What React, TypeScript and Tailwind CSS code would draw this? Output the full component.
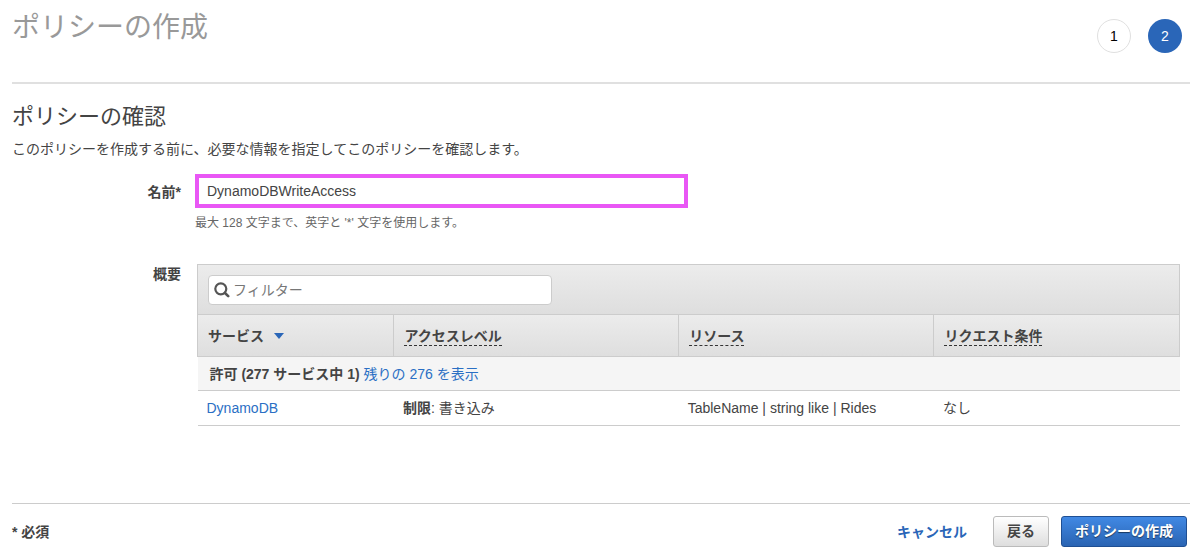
import { useState } from "react";

type PolicyRow = {
  service: string;
  level: string;
  access: string;
  resource: string;
  condition: string;
};

const rows: PolicyRow[] = [
  {
    service: "DynamoDB",
    level: "制限",
    access: "書き込み",
    resource: "TableName | string like | Rides",
    condition: "なし",
  },
];

const hintedHeaders = ["アクセスレベル", "リソース", "リクエスト条件"];

function StepBadge({ step, active }: { step: number; active?: boolean }) {
  return (
    <li
      aria-current={active ? "step" : undefined}
      className={`flex h-[34px] w-[34px] items-center justify-center rounded-full text-sm ${
        active ? "bg-[#2a66b8] text-white" : "border border-[#e0e0e0] text-black"
      }`}
    >
      {step}
    </li>
  );
}

function SearchIcon() {
  return (
    <svg viewBox="0 0 16 16" className="h-4 w-4 shrink-0" fill="none" stroke="#555" aria-hidden="true">
      <circle cx="6.8" cy="6.8" r="5.5" strokeWidth="2.2" />
      <path d="M11 11 14.2 14.2" strokeWidth="2.6" strokeLinecap="round" />
    </svg>
  );
}

export default function App() {
  const [name, setName] = useState("DynamoDBWriteAccess");
  const [filter, setFilter] = useState("");

  const visible = rows.filter((row) => row.service.toLowerCase().includes(filter.toLowerCase()));

  return (
    <main className="bg-white pr-[10px] pl-3 font-['Liberation_Sans','Noto_Sans_CJK_JP',sans-serif] text-sm leading-5 text-[#444]">
      <header className="flex h-[84px] items-start justify-between border-b-2 border-[#e0e0e0] pr-2">
        <h1 className="pt-2 text-[28px] leading-10 text-[#999]">ポリシーの作成</h1>
        <ol className="flex gap-[17px] pt-[19px]">
          <StepBadge step={1} />
          <StepBadge step={2} active />
        </ol>
      </header>

      <section className="pt-[17px]">
        <h2 className="text-[22px] leading-8">ポリシーの確認</h2>
        <p className="mt-[6px]">このポリシーを作成する前に、必要な情報を指定してこのポリシーを確認します。</p>

        <div className="mt-[15px] flex gap-[14px]">
          <label htmlFor="policy-name" className="w-[169px] shrink-0 pt-2 text-right font-bold">
            名前*
          </label>
          <div className="flex-1">
            <input
              id="policy-name"type="text"
              value={name}
              onChange={(e) => setName(e.target.value)}
              className="block h-[34px] w-full max-w-[493px] border-4 border-[#e957f5] bg-white px-2 text-[#444] outline-none"
            />
            <p className="mt-[5px] text-xs leading-5 text-[#666]">最大 128 文字まで、英字と '*' 文字を使用します。</p>
          </div>
        </div>

        <div className="mt-[31px] flex gap-4 pr-[10px]">
          <h3 className="w-[169px] shrink-0 text-right font-bold">概要</h3>
          <div className="flex-1">
            <div className="border border-b-0 border-[#ccc] bg-linear-to-b from-[#ececec] to-[#dedede] px-[10px] pt-[10px] pb-[9px]">
              <label className="flex h-[30px] w-full max-w-[344px] items-center gap-[3px] rounded border border-[#ccc] bg-white px-[5px]">
                <SearchIcon />
                <input
                  type="text"
                  aria-label="フィルター"
                  placeholder="フィルター"
                  value={filter}
                  onChange={(e) => setFilter(e.target.value)}
                  className="w-full min-w-0 outline-none placeholder:text-[#777]"
                />
              </label>
            </div>
            <table className="w-full table-fixed border-collapse text-left">
              <colgroup>
                <col className="w-[20%]" />
                <col className="w-[29%]" />
                <col className="w-[26%]" />
                <col className="w-[25%]" />
              </colgroup>
              <thead>
                <tr className="h-[42px] bg-linear-to-b from-[#ececec] to-[#dedede]">
                  <th className="border border-[#ccc] px-[10px]">
                    <button type="button" className="flex items-center gap-[10px] font-bold">
                      サービス
                      <svg viewBox="0 0 10 6" className="h-[6px] w-[10px]" fill="#2a66b8" aria-hidden="true">
                        <path d="M0 0h10L5 6z" />
                      </svg>
                    </button>
                  </th>
                  {hintedHeaders.map((title) => (
                    <th key={title} className="border border-[#ccc] px-[10px]">
                      <span className="border-b border-dashed border-[#333] pb-px">{title}</span>
                    </th>
                  ))}
                </tr>
              </thead>
              <tbody>
                <tr className="h-[34px] border-b border-[#ccc] bg-[#f5f5f5]">
                  <td colSpan={4} className="px-3">
                    <b>許可 (277 サービス中 1)</b>{" "}
                    <a href="#remaining" className="text-[#2a6fc4]">
                      残りの 276 を表示
                    </a>
                  </td>
                </tr>
                {visible.map((row) => (
                  <tr key={row.service} className="h-[35px] border-b border-[#ccc]">
                    <td className="px-[9px]">
                      <a href="#dynamodb" className="text-[#2a6fc4]">
                        {row.service}
                      </a>
                    </td>
                    <td className="px-[9px]">
                      <b>{row.level}</b>: {row.access}
                    </td>
                    <td className="px-[9px]">{row.resource}</td>
                    <td className="px-[9px]">{row.condition}</td>
                  </tr>
                ))}
              </tbody>
            </table>
          </div>
        </div>
      </section>

      <footer className="mt-[77px] flex items-center justify-between border-t border-[#ccc] pt-3 pr-[3px] pb-[10px] font-bold">
        <p>* 必須</p>
        <div className="flex items-center gap-3">
          <a href="#cancel" className="mr-[14px] text-[#2a66b8]">
            キャンセル
          </a>
          <button
            type="button"
            className="h-[31px] rounded-[3px] border border-[#bbb] bg-linear-to-b from-white to-[#dedede] px-[13px] pb-px"
          >
            戻る
          </button>
          <button
            type="button"
            className="h-[31px] rounded-[3px] border border-[#1f4f93] bg-linear-to-b from-[#4189e4] to-[#2a64b3] px-[13px] pb-px text-white text-shadow-[0_1px_1px_#0008]"
          >
            ポリシーの作成
          </button>
        </div>
      </footer>
    </main>
  );
}
